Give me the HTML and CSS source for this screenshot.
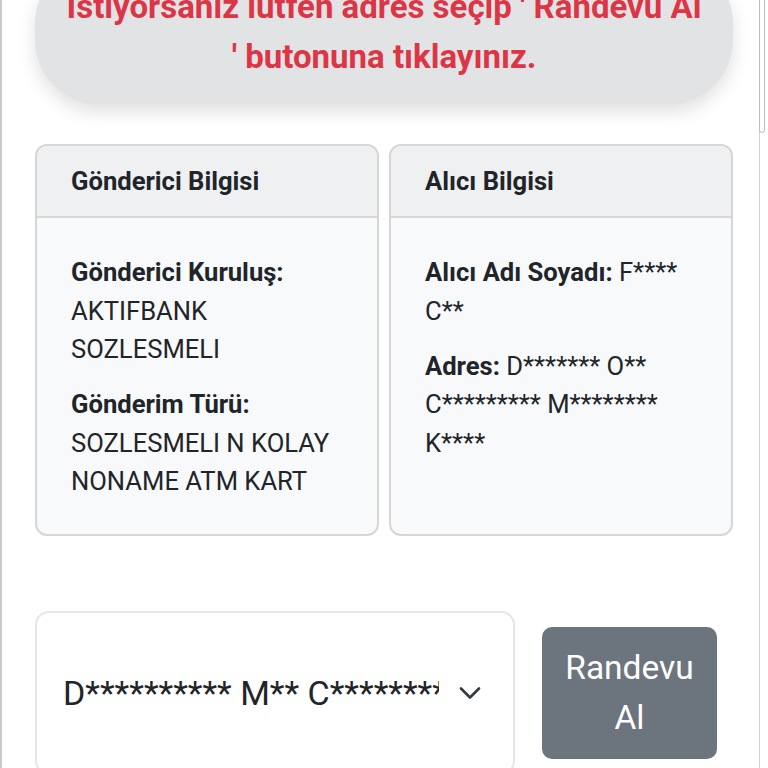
FILE: index.html
```html
<!DOCTYPE html>
<html lang="tr">
<head>
    <meta charset="UTF-8">
    <meta name="viewport" content="width=device-width, initial-scale=1.0">
    <title>Randevu Al</title>
    <link rel="stylesheet" href="styles.css">
</head>
<body>
    <div class="page">
        <div class="notice">
            İstiyorsanız lütfen adres seçip ' Randevu Al '&nbsp;butonuna tıklayınız.
        </div>

        <div class="info-row">
            <div class="info-card">
                <div class="info-card-header">Gönderici Bilgisi</div>
                <div class="info-card-body">
                    <p><b>Gönderici Kuruluş:</b> AKTIFBANK SOZLESMELI</p>
                    <p><b>Gönderim Türü:</b> SOZLESMELI N KOLAY NONAME ATM KART</p>
                </div>
            </div>
            <div class="info-card">
                <div class="info-card-header">Alıcı Bilgisi</div>
                <div class="info-card-body">
                    <p><b>Alıcı Adı Soyadı:</b> F**** C**</p>
                    <p><b>Adres:</b> D******* O** C********* M******** K****</p>
                </div>
            </div>
        </div>

        <div class="appointment-row">
            <div class="address-select">
                <span class="address-text">D********** M** C********* K****</span>
                <svg class="chevron" width="22" height="14" viewBox="0 0 22 14">
                    <path d="M2 2.5 L11 11.5 L20 2.5" fill="none" stroke="#343a40" stroke-width="2.6" stroke-linecap="round" stroke-linejoin="round"/>
                </svg>
            </div>
            <button class="btn-appointment">Randevu Al</button>
        </div>
    </div>
    <div class="scroll-thumb"></div>
</body>
</html>
```

FILE: styles.css
```css
html, body {
    margin: 0;
    height: 100%;
    overflow: hidden;
}

body {
    font-family: Roboto, "Noto Sans", sans-serif;
    color: #212529;
    background: #fff;
}

.page {
    box-sizing: border-box;
    width: 760px;
    min-height: 100%;
    border-left: 2px solid #c9c9c9;
    border-right: 1px solid #d0d0d0;
    padding: 0 26px 0 33px;
}

.notice {
    margin-top: -40px;
    padding: 22px 20px;
    background: #e2e3e5;
    border-radius: 64px;
    box-shadow: 0 8px 18px rgba(0, 0, 0, 0.12);
    color: #dc3545;
    font-size: 33px;
    font-weight: bold;
    line-height: 50px;
    text-align: center;
}

.info-row {
    margin-top: 40px;
    display: grid;
    grid-template-columns: 1fr 1fr;
    gap: 10px;
}

.info-card {
    border: 2px solid #d6d6d6;
    border-radius: 12px;
    overflow: hidden;
    background: #f8f9fa;
    font-size: 25.6px;
    line-height: 38.4px;
}

.info-card-header {
    padding: 16px 34px;
    background: #eff0f2;
    border-bottom: 2px solid #d6d6d6;
    font-weight: bold;
}

.info-card-body {
    padding: 35px 34px 34px;
}

.info-card-body p {
    margin: 0 0 16.6px;
}

.info-card-body p:last-child {
    margin-bottom: 0;
}

.appointment-row {
    margin-top: 75px;
    display: flex;
    align-items: center;
    gap: 27px;
}

.address-select {
    box-sizing: border-box;
    width: 480px;
    height: 164px;
    display: flex;
    align-items: center;
    gap: 20px;
    padding: 0 32px 0 26px;
    border: 2px solid #e6e6e6;
    border-radius: 14px;
    background: #fff;
    font-size: 34px;
    color: #212529;
}

.address-text {
    flex: 1;
    overflow: hidden;
    white-space: nowrap;
}

.chevron {
    flex: none;
}

.btn-appointment {
    box-sizing: border-box;
    width: 175px;
    padding: 16px 20px;
    border: none;
    border-radius: 10px;
    background: #6c757d;
    color: #fff;
    font-family: Roboto, "Noto Sans", sans-serif;
    font-size: 33.5px;
    line-height: 50px;
}

.scroll-thumb {
    position: fixed;
    top: -10px;
    left: 759px;
    width: 6px;
    height: 143px;
    box-sizing: border-box;
    border: 1.5px solid #bdbdbd;
    border-radius: 0 0 4px 4px;
    background: #fff;
}
```
